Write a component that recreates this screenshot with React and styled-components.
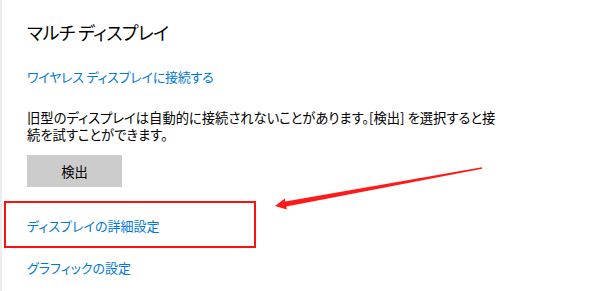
import React from 'react';
import styled, { createGlobalStyle } from 'styled-components';

const GlobalStyle = createGlobalStyle`
  html, body {
    margin: 0;
    padding: 0;
    background: #fff;
  }
  body {
    font-family: "Noto Sans CJK JP", "Noto Sans", sans-serif;
    color: #000;
  }
`;

const StyledPage = styled.div`
  position: relative;
  width: 600px;
  height: 291px;
  overflow: hidden;
  background: #fff;
`;

const StyledPanel = styled.section`
  display: flex;
  flex-direction: column;
  align-items: flex-start;
  height: 100%;
  box-sizing: border-box;
  padding-left: 25px;
  border-left: 2px solid #ececec;
`;

const StyledTitle = styled.h2`
  margin: 18px 0 0;
  font-size: 18px;
  line-height: 28px;
  font-weight: 400;
  letter-spacing: -0.6px;
  font-feature-settings: 'palt';
`;

const StyledLink = styled.a`
  display: block;
  margin-top: ${({ $gap }) => $gap || 0}px;
  color: #0078d7;
  font-size: 13px;
  line-height: 20px;
  letter-spacing: ${({ $tight }) => ($tight ? '-0.25px' : '0')};
  text-decoration: none;
  font-feature-settings: 'palt';
  white-space: nowrap;
`;

const StyledText = styled.p`
  margin: 22px 0 0;
  font-size: 13.3px;
  line-height: 17px;
  font-feature-settings: 'palt';
  white-space: nowrap;
`;

const StyledButton = styled.button`
  margin-top: 12px;
  width: 95px;
  height: 32px;
  border: 0;
  padding: 0;
  background: #cccccc;
  color: #000;
  font-family: inherit;
  font-size: 13.3px;
`;

const StyledHighlight = styled.div`
  margin: 14px 0 0 -23px;
  width: 252px;
  box-sizing: border-box;
  padding: 13px 0 10px 21px;
  border: 2px solid #ff1010;
`;

const StyledArrow = styled.svg`
  position: absolute;
  top: 0;
  left: 0;
  pointer-events: none;
`;

const Arrow = () => (
  <StyledArrow width="600" height="291" viewBox="0 0 600 291">
    <polygon
      fill="#ff1a1a"
      points="481.9,167.3 285.3,201.5 284.8,198.4 275,206 286.9,209.6 286.3,206.5 482.1,168.7"
    />
  </StyledArrow>
);

const App = () => (
  <StyledPage>
    <GlobalStyle />
    <StyledPanel>
      <StyledTitle>マルチ ディスプレイ</StyledTitle>
      <StyledLink href="#" $gap={21} $tight>
        ワイヤレス ディスプレイに接続する
      </StyledLink>
      <StyledText>
        旧型のディスプレイは自動的に接続されないことがあります。[検出] を選択すると接
        <br />
        続を試すことができます。
      </StyledText>
      <StyledButton>検出</StyledButton>
      <StyledHighlight>
        <StyledLink href="#">ディスプレイの詳細設定</StyledLink>
      </StyledHighlight>
      <StyledLink href="#" $gap={10}>
        グラフィックの設定
      </StyledLink>
    </StyledPanel>
    <Arrow />
  </StyledPage>
);

export default App;
